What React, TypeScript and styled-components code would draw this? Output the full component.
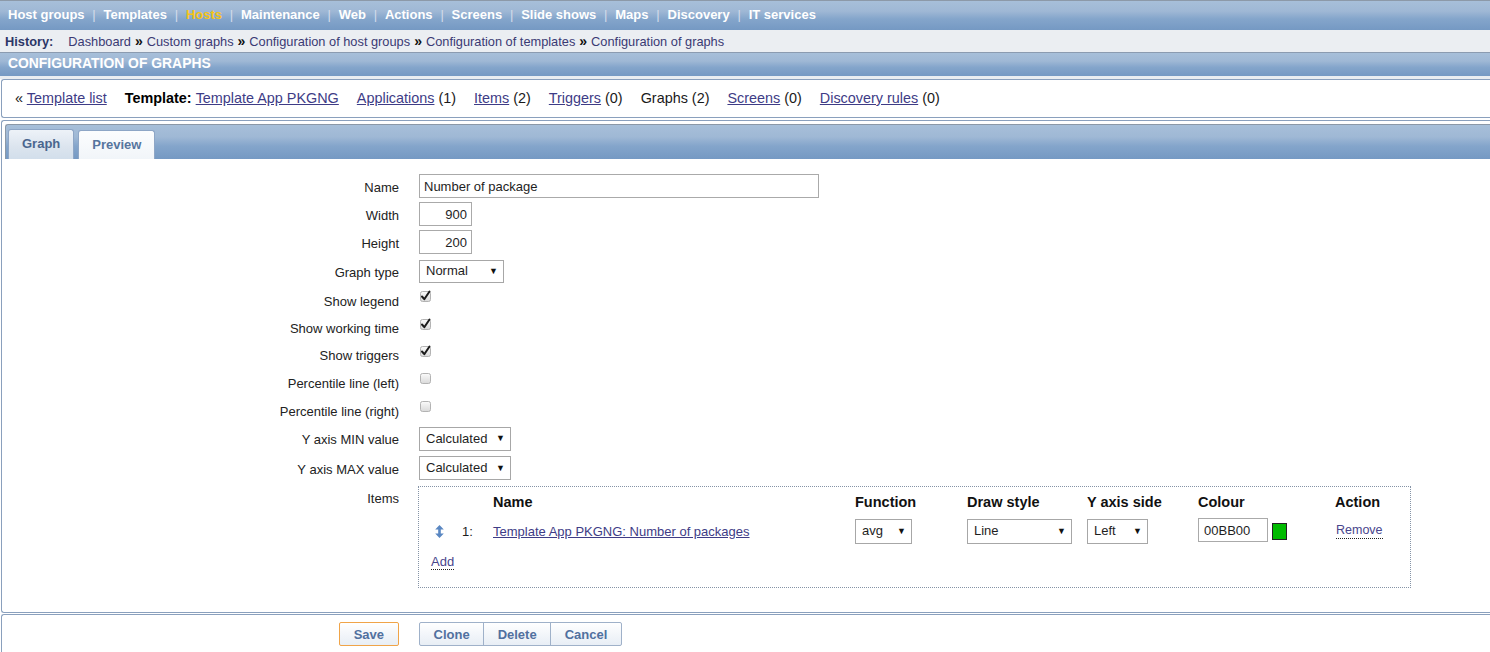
import React from 'react';
import styled, { createGlobalStyle } from 'styled-components';

const Global = createGlobalStyle`
  html, body { margin: 0; padding: 0; background: #ffffff; }
  body {
    font-family: "Liberation Sans", Arial, sans-serif;
    color: #1e1e1e;
    overflow: hidden;
  }
  * { box-sizing: border-box; }
`;

const barGradient =
  'linear-gradient(to bottom, #a7bfd9 0%, #9fb8d5 35%, #84a5cb 62%, #7599c3 100%)';

const Page = styled.div`
  width: 1490px;
  display: flex;
  flex-direction: column;
`;

/* ---------- top navigation ---------- */
const TopNav = styled.nav`
  display: flex;
  align-items: center;
  height: 30px;
  border-top: 1px solid #8c99a8;
  background: ${barGradient};
  padding: 0 0 2px 8px;
`;

const NavItem = styled.span<{ $active?: boolean }>`
  font-size: 13px;
  font-weight: bold;
  color: ${(p) => (p.$active ? '#f5c417' : '#ffffff')};
  white-space: nowrap;
`;

const NavSep = styled.span`
  font-size: 13px;
  color: #d3dcea;
  margin: 0 7.8px;
`;

/* ---------- history ---------- */
const HistoryBar = styled.div`
  display: flex;
  align-items: center;
  height: 23px;
  background: #ebeef2;
  border-bottom: 1px solid #8b9bb0;
  padding: 0 0 0 5px;
  font-size: 12.8px;
`;

const HistoryLabel = styled.span`
  font-weight: bold;
  color: #2c3767;
  margin-right: 15px;
`;

const HistoryLink = styled.a`
  color: #3a3a74;
  text-decoration: none;
`;

const HistorySep = styled.span`
  font-weight: bold;
  font-size: 14px;
  color: #111;
  margin: 0 4px;
  line-height: 12px;
`;

/* ---------- title ---------- */
const TitleBar = styled.div`
  height: 26px;
  background: ${barGradient};
  background-size: 100% 23px;
  background-repeat: no-repeat;
  border-bottom: 3px solid #e9edf1;
  padding: 2px 0 0 8px;
  font-size: 13.9px;
  font-weight: bold;
  color: #ffffff;
  text-transform: uppercase;
`;

/* ---------- header links ---------- */
const HeaderBox = styled.div`
  margin-left: 1px;
  height: 39px;
  border: 1px solid #8aa0bd;
  border-right: none;
  border-radius: 3px 0 0 3px;
  display: flex;
  align-items: center;
  gap: 18px;
  padding: 0 0 1px 13px;
  font-size: 14.4px;
  color: #1a1a1a;
`;

const HeaderItem = styled.span`
  white-space: nowrap;
`;

const Strong = styled.b`
  color: #000;
  margin-right: 4px;
`;

const Link = styled.a<{ $size?: number }>`
  color: #3e3c86;
  text-decoration: underline;
  font-size: ${(p) => (p.$size ? `${p.$size}px` : 'inherit')};
`;

/* ---------- tab box ---------- */
const TabBox = styled.div`
  margin: 2px 0 0 1px;
  border: 1px solid #8aa0bd;
  border-right: none;
  border-radius: 3px 0 0 3px;
`;

const TabBar = styled.div`
  margin: 3px 0 0 3px;
  height: 35px;
  border-top: 1px solid #8b98a7;
  border-left: 1px solid #8b98a7;
  border-radius: 3px 0 0 0;
  background: ${barGradient};
  display: flex;
  align-items: flex-end;
  gap: 4px;
  padding-left: 2px;
`;

const Tab = styled.div<{ $active?: boolean }>`
  height: ${(p) => (p.$active ? 30 : 29)}px;
  padding: 0 13px 2px;
  border: 1px solid #8ea6c6;
  border-bottom: none;
  border-radius: 3px 3px 0 0;
  display: flex;
  align-items: center;
  font-size: 13px;
  font-weight: bold;
  color: ${(p) => (p.$active ? '#4a668e' : '#56759e')};
  background: ${(p) =>
    p.$active
      ? 'linear-gradient(to bottom, #edf2f8 0%, #dbe4ee 60%, #d2deeb 100%)'
      : 'linear-gradient(to bottom, #fcfdfe 0%, #f1f5f9 100%)'};
`;

/* ---------- form ---------- */
const FormBody = styled.div`
  padding: 13px 0 24px;
`;

const FormRow = styled.div<{ $h: number }>`
  display: grid;
  grid-template-columns: 397px 1fr;
  column-gap: 20px;
  align-items: center;
  height: ${(p) => p.$h}px;
`;

const ItemsRow = styled.div`
  display: grid;
  grid-template-columns: 397px 1fr;
  column-gap: 20px;
  align-items: start;
`;

const Label = styled.div<{ $top?: number }>`
  text-align: right;
  font-size: 13px;
  color: #222;
  padding-top: ${(p) => p.$top ?? 2}px;
`;

const TextInput = styled.input<{ $w: number; $right?: boolean }>`
  width: ${(p) => p.$w}px;
  height: 24px;
  border: 1px solid #aaaaaa;
  background: #fff;
  font-family: "Liberation Sans", Arial, sans-serif;
  font-size: 13px;
  color: #1e1e1e;
  padding: 0 4px;
  text-align: ${(p) => (p.$right ? 'right' : 'left')};
  outline: none;
  margin: 0;
`;

const FakeSelect = styled.div<{ $w: number; $h: number }>`
  width: ${(p) => p.$w}px;
  height: ${(p) => p.$h}px;
  border: 1px solid #a7a7a7;
  background: #fff;
  display: flex;
  align-items: center;
  justify-content: space-between;
  padding: 0 5px 1px 6px;
  font-size: 13px;
  color: #1e1e1e;
`;

const Arrow = styled.span`
  font-size: 9px;
  color: #111;
`;

const CheckWrap = styled.span`
  align-self: start;
  margin-top: 4px;
  width: 13px;
  height: 13px;
  display: inline-flex;
`;

const Check: React.FC<{ checked?: boolean }> = ({ checked }) => (
  <CheckWrap>
    <svg width="13" height="13" viewBox="0 0 13 13">
      <defs>
        <linearGradient id="cbg" x1="0" y1="0" x2="0" y2="1">
          <stop offset="0" stopColor="#fbfbfb" />
          <stop offset="1" stopColor="#d9d9d9" />
        </linearGradient>
      </defs>
      <rect x="1.5" y="1.5" width="10" height="10" rx="2" fill="url(#cbg)" stroke="#b3b3b3" />
      {checked && (
        <path d="M3 6.5 L5.3 9.2 L10.5 1.5" fill="none" stroke="#1b1b1b" strokeWidth="2" strokeLinecap="round" strokeLinejoin="round" />
      )}
    </svg>
  </CheckWrap>
);

const Select: React.FC<{ w: number; h: number; value: string }> = ({ w, h, value }) => (
  <FakeSelect $w={w} $h={h}>
    <span>{value}</span>
    <Arrow>▼</Arrow>
  </FakeSelect>
);

/* ---------- items table ---------- */
const ItemsBox = styled.div`
  margin: 3px 0 0 -1px;
  width: 993px;
  border: 1px dotted #8593a6;
  padding-bottom: 10px;
`;

const ItemsGrid = styled.div`
  display: grid;
  grid-template-columns: 40px 34px 362px 112px 120px 111px 137px 1fr;
  grid-template-rows: 28px 32px 30px;
  align-items: center;
`;

const HeadCell = styled.div`
  font-size: 14.5px;
  font-weight: bold;
  color: #111;
  padding-top: 1px;
`;

const Cell = styled.div<{ $pl?: number }>`
  display: flex;
  align-items: center;
  padding-left: ${(p) => p.$pl ?? 0}px;
  font-size: 13px;
  color: #1e1e1e;
`;

const DragCell = styled.div`
  display: flex;
  justify-content: center;
  padding-left: 1px;
`;

const AddCell = styled.div`
  grid-column: 1 / -1;
  padding-left: 12px;
  display: flex;
  align-items: center;
`;

const DottedLink = styled.a<{ $size: number }>`
  font-size: ${(p) => p.$size}px;
  color: #48458c;
  text-decoration: none;
  border-bottom: 1px dotted #222;
  line-height: 15px;
`;

const ColourCell = styled.div`
  display: flex;
  align-items: center;
  gap: 4px;
  margin-top: -2px;
`;

const Swatch = styled.span<{ $c: string }>`
  width: 15px;
  height: 17px;
  background: ${(p) => p.$c};
  border: 1px solid #222;
  margin-top: 2px;
`;

const DragIcon = () => (
  <svg width="9" height="13" viewBox="0 0 9 13">
    <path d="M4.5 0 L8.8 4.6 L5.8 4.6 L5.8 8.4 L8.8 8.4 L4.5 13 L0.2 8.4 L3.2 8.4 L3.2 4.6 L0.2 4.6 Z" fill="#5a87c2" />
  </svg>
);

/* ---------- buttons ---------- */
const ButtonBox = styled.div`
  margin: 1px 0 0 1px;
  border-top: 1px solid #8aa0bd;
  border-left: 1px solid #8aa0bd;
  border-radius: 3px 0 0 0;
  padding: 7px 0 10px;
`;

const ButtonRow = styled.div`
  display: grid;
  grid-template-columns: 397px 1fr;
  column-gap: 20px;
`;

const ButtonGroup = styled.div`
  display: flex;
`;

const Button = styled.button<{ $primary?: boolean; $pos?: 'first' | 'mid' | 'last' | 'solo' }>`
  height: 24px;
  padding: 0 13.5px;
  font-family: "Liberation Sans", Arial, sans-serif;
  font-size: 13px;
  font-weight: bold;
  color: #51709f;
  background: linear-gradient(to bottom, #ffffff 0%, #f3f6fa 50%, #e8eef5 100%);
  border: 1px solid ${(p) => (p.$primary ? '#f0a448' : '#9fb1c9')};
  margin-left: ${(p) => (p.$pos === 'mid' || p.$pos === 'last' ? '-1px' : '0')};
  border-radius: ${(p) =>
    p.$pos === 'first' ? '2px 0 0 2px' : p.$pos === 'last' ? '0 2px 2px 0' : p.$pos === 'mid' ? '0' : '2px'};
  cursor: pointer;
`;

const SaveButton = styled(Button)`
  justify-self: end;
  padding: 0 14px;
`;

const navItems = [
  'Host groups',
  'Templates',
  'Hosts',
  'Maintenance',
  'Web',
  'Actions',
  'Screens',
  'Slide shows',
  'Maps',
  'Discovery',
  'IT services',
];

const history = [
  'Dashboard',
  'Custom graphs',
  'Configuration of host groups',
  'Configuration of templates',
  'Configuration of graphs',
];

export default function App() {
  return (
    <Page>
      <Global />
      <TopNav>
        {navItems.map((n, i) => (
          <React.Fragment key={n}>
            {i > 0 && <NavSep>|</NavSep>}
            <NavItem $active={n === 'Hosts'}>{n}</NavItem>
          </React.Fragment>
        ))}
      </TopNav>

      <HistoryBar>
        <HistoryLabel>History:</HistoryLabel>
        {history.map((h, i) => (
          <React.Fragment key={h}>
            {i > 0 && <HistorySep>»</HistorySep>}
            <HistoryLink href="#">{h}</HistoryLink>
          </React.Fragment>
        ))}
      </HistoryBar>

      <TitleBar>Configuration of graphs</TitleBar>

      <HeaderBox>
        <HeaderItem>
          « <Link href="#">Template list</Link>
        </HeaderItem>
        <HeaderItem>
          <Strong>Template:</Strong>
          <Link href="#">Template App PKGNG</Link>
        </HeaderItem>
        <HeaderItem>
          <Link href="#">Applications</Link> (1)
        </HeaderItem>
        <HeaderItem>
          <Link href="#">Items</Link> (2)
        </HeaderItem>
        <HeaderItem>
          <Link href="#">Triggers</Link> (0)
        </HeaderItem>
        <HeaderItem>Graphs (2)</HeaderItem>
        <HeaderItem>
          <Link href="#">Screens</Link> (0)
        </HeaderItem>
        <HeaderItem>
          <Link href="#">Discovery rules</Link> (0)
        </HeaderItem>
      </HeaderBox>

      <TabBox>
        <TabBar>
          <Tab $active>Graph</Tab>
          <Tab>Preview</Tab>
        </TabBar>
        <FormBody>
          <FormRow $h={28}>
            <Label>Name</Label>
            <TextInput $w={400} readOnly value="Number of package" />
          </FormRow>
          <FormRow $h={28}>
            <Label>Width</Label>
            <TextInput $w={53} $right readOnly value="900" />
          </FormRow>
          <FormRow $h={28}>
            <Label>Height</Label>
            <TextInput $w={53} $right readOnly value="200" />
          </FormRow>
          <FormRow $h={30}>
            <Label>Graph type</Label>
            <Select w={85} h={23} value="Normal" />
          </FormRow>
          <FormRow $h={28}>
            <Label>Show legend</Label>
            <Check checked />
          </FormRow>
          <FormRow $h={27}>
            <Label>Show working time</Label>
            <Check checked />
          </FormRow>
          <FormRow $h={27}>
            <Label>Show triggers</Label>
            <Check checked />
          </FormRow>
          <FormRow $h={28}>
            <Label>Percentile line (left)</Label>
            <Check />
          </FormRow>
          <FormRow $h={28}>
            <Label>Percentile line (right)</Label>
            <Check />
          </FormRow>
          <FormRow $h={29}>
            <Label>Y axis MIN value</Label>
            <Select w={92} h={24} value="Calculated" />
          </FormRow>
          <FormRow $h={30}>
            <Label>Y axis MAX value</Label>
            <Select w={92} h={24} value="Calculated" />
          </FormRow>
          <ItemsRow>
            <Label $top={8}>Items</Label>
            <ItemsBox>
              <ItemsGrid>
                <span />
                <span />
                <HeadCell>Name</HeadCell>
                <HeadCell>Function</HeadCell>
                <HeadCell>Draw style</HeadCell>
                <HeadCell>Y axis side</HeadCell>
                <HeadCell>Colour</HeadCell>
                <HeadCell>Action</HeadCell>

                <DragCell>
                  <DragIcon />
                </DragCell>
                <Cell $pl={3}>1:</Cell>
                <Cell>
                  <Link href="#" $size={13}>
                    Template App PKGNG: Number of packages
                  </Link>
                </Cell>
                <Cell>
                  <Select w={57} h={25} value="avg" />
                </Cell>
                <Cell>
                  <Select w={105} h={25} value="Line" />
                </Cell>
                <Cell>
                  <Select w={61} h={25} value="Left" />
                </Cell>
                <ColourCell>
                  <TextInput $w={70} readOnly value="00BB00" style={{ paddingLeft: 5 }} />
                  <Swatch $c="#00bb00" />
                </ColourCell>
                <Cell $pl={1}>
                  <DottedLink href="#" $size={12.5}>
                    Remove
                  </DottedLink>
                </Cell>

                <AddCell>
                  <DottedLink href="#" $size={13}>
                    Add
                  </DottedLink>
                </AddCell>
              </ItemsGrid>
            </ItemsBox>
          </ItemsRow>
        </FormBody>
      </TabBox>

      <ButtonBox>
        <ButtonRow>
          <SaveButton $primary $pos="solo">
            Save
          </SaveButton>
          <ButtonGroup>
            <Button $pos="first">Clone</Button>
            <Button $pos="mid">Delete</Button>
            <Button $pos="last">Cancel</Button>
          </ButtonGroup>
        </ButtonRow>
      </ButtonBox>
    </Page>
  );
}
